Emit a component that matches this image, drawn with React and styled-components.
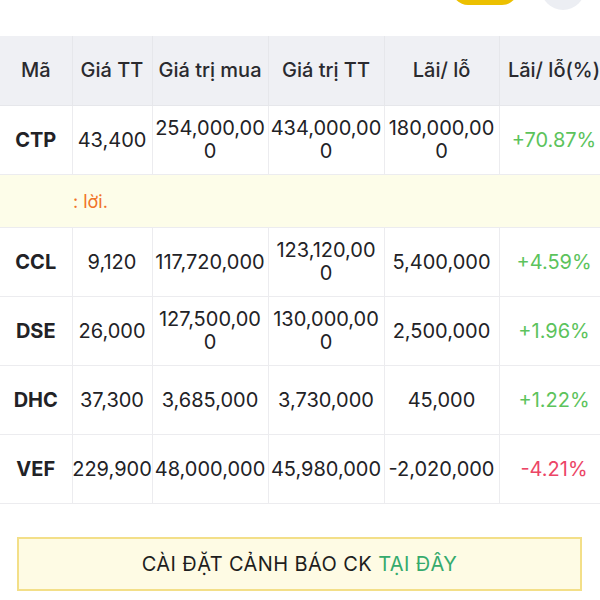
import React from 'react';
import styled, { createGlobalStyle } from 'styled-components';

const GlobalStyle = createGlobalStyle`
  html, body {
    margin: 0;
    padding: 0;
    background: #ffffff;
    font-family: Inter, Roboto, "Noto Sans", sans-serif;
    color: #222226;
  }
`;

const Page = styled.div`
  width: 600px;
  height: 600px;
  overflow: hidden;
  background: #ffffff;
`;

const TopBar = styled.div`
  height: 36px;
  display: flex;
  justify-content: flex-end;
  align-items: flex-start;
  gap: 23px;
  padding-right: 15px;
  overflow: hidden;
`;

const Pill = styled.div`
  width: 66px;
  height: 32px;
  margin-top: -27px;
  border-radius: 16px;
  background: #ecc000;
  position: relative;

  &::after {
    content: '';
    position: absolute;
    right: 6px;
    top: 5px;
    width: 22px;
    height: 22px;
    border-radius: 50%;
    background: #f7e7a6;
  }
`;

const Avatar = styled.div`
  width: 44px;
  height: 44px;
  margin-top: -34px;
  border-radius: 50%;
  background: #eceef3;
`;

const TableWrap = styled.div`
  width: 600px;
  overflow: hidden;
`;

const Table = styled.table`
  width: 609px;
  border-collapse: collapse;
  table-layout: fixed;
  font-size: 20px;
  line-height: 23px;
`;

const HeadCell = styled.th`
  height: 69px;
  padding: 0;
  background: #eff0f4;
  border: 1px solid #e6e7eb;
  border-top: none;
  font-weight: 500;
  color: #2a2a2e;
  text-align: center;
  vertical-align: middle;
  white-space: nowrap;
  &:first-child { border-left: none; }
`;

const Cell = styled.td`
  height: 68px;
  padding: 0;
  border: 1px solid #ececef;
  vertical-align: middle;
  &:first-child { border-left: none; }
`;

const CellText = styled.div`
  display: flex;
  flex-direction: column;
  align-items: center;
  overflow: hidden;
  white-space: nowrap;
  font-weight: ${p => (p.$bold ? 700 : 400)};
  color: ${p => p.$tone === 'up' ? '#5cc35c' : p.$tone === 'down' ? '#ec4566' : '#222226'};
`;

const NoteCell = styled.td`
  height: 52px;
  padding: 0 0 0 73px;
  background: #fdfde9;
  border-top: 1px solid #ececef;
  border-bottom: 1px solid #ececef;
  color: #f07328;
  font-size: 18px;
  vertical-align: middle;
`;

const Banner = styled.div`
  margin: 33px 18px 0 17px;
  height: 50px;
  border: 2px solid #f3df88;
  background: #fefbe4;
  display: flex;
  align-items: center;
  justify-content: center;
  font-size: 20px;
  color: #1e1e20;
  letter-spacing: 0.4px;
`;

const Link = styled.span`
  color: #35aa6d;
  margin-left: 6px;
`;

const columns = [
  { label: 'Mã', width: 72 },
  { label: 'Giá TT', width: 80 },
  { label: 'Giá trị mua', width: 116 },
  { label: 'Giá trị TT', width: 116 },
  { label: 'Lãi/ lỗ', width: 115 },
  { label: 'Lãi/ lỗ(%)', width: 110 },
];

const rows = [
  { code: 'CTP', price: ['43,400'], buy: ['254,000,00', '0'], value: ['434,000,00', '0'], pl: ['180,000,00', '0'], pct: '+70.87%', tone: 'up', note: ': lời.' },
  { code: 'CCL', price: ['9,120'], buy: ['117,720,000'], value: ['123,120,00', '0'], pl: ['5,400,000'], pct: '+4.59%', tone: 'up' },
  { code: 'DSE', price: ['26,000'], buy: ['127,500,00', '0'], value: ['130,000,00', '0'], pl: ['2,500,000'], pct: '+1.96%', tone: 'up' },
  { code: 'DHC', price: ['37,300'], buy: ['3,685,000'], value: ['3,730,000'], pl: ['45,000'], pct: '+1.22%', tone: 'up' },
  { code: 'VEF', price: ['229,900'], buy: ['48,000,000'], value: ['45,980,000'], pl: ['-2,020,000'], pct: '-4.21%', tone: 'down' },
];

const Lines = ({ lines, ...rest }) => (
  <CellText {...rest}>
    {lines.map((l, i) => <span key={i}>{l}</span>)}
  </CellText>
);

const App = () => (
  <Page>
    <GlobalStyle />
    <TopBar>
      <Pill />
      <Avatar />
    </TopBar>
    <TableWrap>
      <Table>
        <colgroup>
          {columns.map(c => <col key={c.label} style={{ width: c.width }} />)}
        </colgroup>
        <thead>
          <tr>
            {columns.map(c => <HeadCell key={c.label}>{c.label}</HeadCell>)}
          </tr>
        </thead>
        <tbody>
          {rows.map(r => (
            <React.Fragment key={r.code}>
              <tr>
                <Cell><Lines $bold lines={[r.code]} /></Cell>
                <Cell><Lines lines={r.price} /></Cell>
                <Cell><Lines lines={r.buy} /></Cell>
                <Cell><Lines lines={r.value} /></Cell>
                <Cell><Lines lines={r.pl} /></Cell>
                <Cell><Lines $tone={r.tone} lines={[r.pct]} /></Cell>
              </tr>
              {r.note && (
                <tr>
                  <NoteCell colSpan={6}>{r.note}</NoteCell>
                </tr>
              )}
            </React.Fragment>
          ))}
        </tbody>
      </Table>
    </TableWrap>
    <Banner>
      CÀI ĐẶT CẢNH BÁO CK<Link>TẠI ĐÂY</Link>
    </Banner>
  </Page>
);

export default App;
